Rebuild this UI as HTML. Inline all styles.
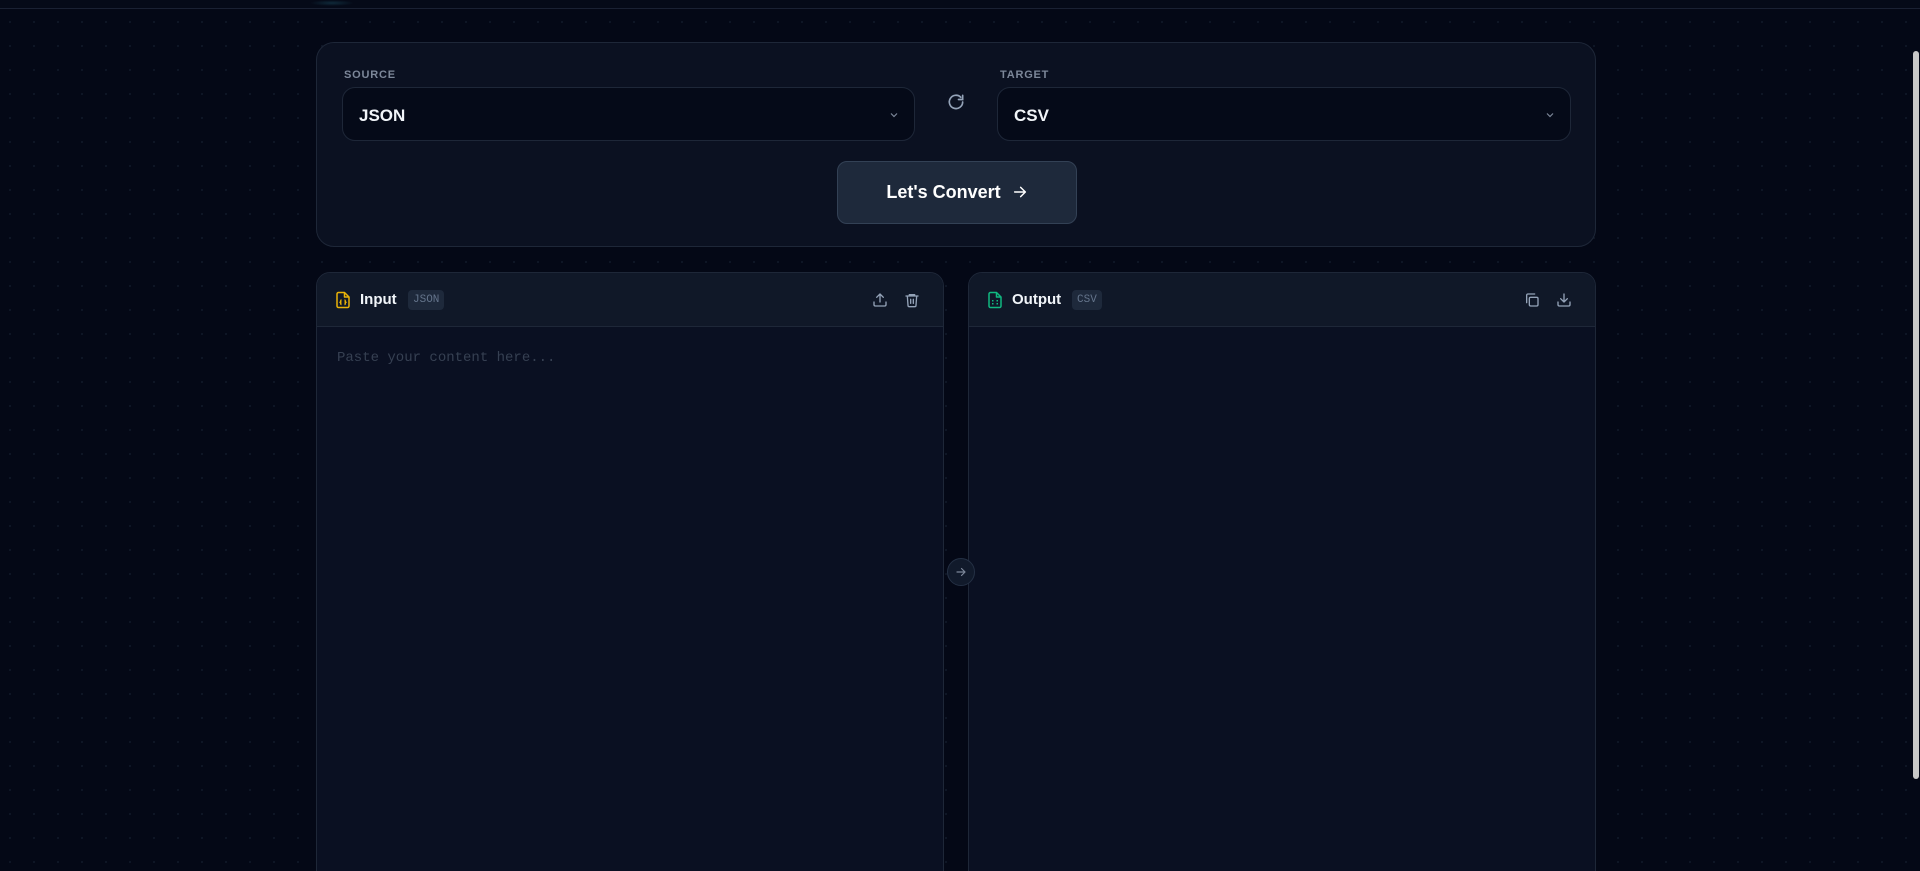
<!DOCTYPE html>
<html><head><meta charset="utf-8"><style>
*{box-sizing:border-box;margin:0;padding:0}
html,body{width:1920px;height:871px;overflow:hidden;background:#040816;font-family:"Liberation Sans",sans-serif;}
body{position:relative;background-color:#040816;background-image:radial-gradient(circle,#0f1626 1px,transparent 1.3px);background-size:24px 24px;background-position:-2px 10px;}
.top{position:absolute;left:0;top:0;width:1920px;height:9px;background:#050a18;border-bottom:1px solid #1a2133}
.glow{position:absolute;left:310px;top:0;width:44px;height:6px;background:radial-gradient(ellipse,#0f2a3a,transparent 70%)}
.cfg{position:absolute;left:316px;top:42px;width:1280px;height:205px;background:#0b1121;border:1px solid #1e2738;border-radius:18px}
.lbl{position:absolute;top:26px;font-size:11px;font-weight:bold;letter-spacing:.8px;color:#7c8799}
.sel{position:absolute;top:44px;height:54px;background:#050a18;border:1px solid #1e2738;border-radius:13px;color:#f1f5f9;font-size:17px;font-weight:bold;padding:18px 0 0 16px}
.sel svg{position:absolute;right:14px;top:21px}
.btn{position:absolute;left:520px;top:118px;width:240px;height:63px;background:#1e293b;border:1px solid #334155;border-radius:10px;color:#fff;font-size:18px;font-weight:bold;text-align:center;line-height:61px}
.pan{position:absolute;top:272px;width:628px;height:620px;background:#0a1022;border:1px solid #1e2738;border-radius:14px;overflow:hidden}
.hd{height:54px;background:#101828;border-bottom:1px solid #1e2738;position:relative}
.hd .ic{position:absolute;left:17px;top:17px}
.hd .t{position:absolute;left:43px;top:18px;font-size:15px;font-weight:bold;color:#f1f5f9}
.badge{position:absolute;top:17px;height:20px;background:#1e293b;border-radius:4px;color:#64748b;font-family:"Liberation Mono",monospace;font-size:11px;line-height:20px;padding:0 5px}
.ac{position:absolute;top:19px}
.ph{position:absolute;left:20px;top:77px;font-family:"Liberation Mono",monospace;font-size:14px;color:#364052}
.mid{position:absolute;z-index:5;left:947px;top:558px;width:28px;height:28px;border-radius:50%;background:#111a2b;border:1px solid #243044}
.sb{position:absolute;left:1913px;top:51px;width:6px;height:728px;background:#c8c8c8;border-radius:3px}
</style></head><body>
<div class="top"></div><div class="glow"></div>
<div class="cfg">
 <div class="lbl" style="left:27px">SOURCE</div>
 <div class="sel" style="left:25px;width:573px">JSON<svg width="12" height="12" viewBox="0 0 12 12"><path d="M3 4.5l3 3 3-3" fill="none" stroke="#7c8799" stroke-width="1.2"/></svg></div>
 <svg style="position:absolute;left:629px;top:49px" width="20" height="20" viewBox="0 0 24 24" fill="none" stroke="#94a3b8" stroke-width="2" stroke-linecap="round"><path d="M20 12a8 8 0 1 1-2.3-5.7"/><path d="M20 4v5h-5"/></svg>
 <div class="lbl" style="left:683px">TARGET</div>
 <div class="sel" style="left:680px;width:574px">CSV<svg width="12" height="12" viewBox="0 0 12 12"><path d="M3 4.5l3 3 3-3" fill="none" stroke="#7c8799" stroke-width="1.2"/></svg></div>
 <div class="btn">Let's Convert <svg style="vertical-align:-2px;margin-left:6px" width="16" height="16" viewBox="0 0 24 24" fill="none" stroke="#fff" stroke-width="2.2" stroke-linecap="round" stroke-linejoin="round"><path d="M4 12h16M13 5l7 7-7 7"/></svg></div>
</div>
<div class="pan" style="left:316px">
 <div class="hd">
  <svg class="ic" width="18" height="20" viewBox="0 0 24 24" fill="none" stroke="#eab308" stroke-width="2" stroke-linejoin="round"><path d="M14 2H6a2 2 0 0 0-2 2v16a2 2 0 0 0 2 2h12a2 2 0 0 0 2-2V8z"/><path d="M14 2v6h6"/><path d="M10 12c-1 0-1 1-1 2s-1 1-1 1 1 0 1 1 0 2 1 2M14 12c1 0 1 1 1 2s1 1 1 1-1 0-1 1 0 2-1 2"/></svg>
  <div class="t">Input</div>
  <div class="badge" style="left:91px">JSON</div>
  <svg class="ac" style="left:555px" width="16" height="16" viewBox="0 0 24 24" fill="none" stroke="#94a3b8" stroke-width="2" stroke-linecap="round" stroke-linejoin="round"><path d="M21 15v4a2 2 0 0 1-2 2H5a2 2 0 0 1-2-2v-4M17 8l-5-5-5 5M12 3v12"/></svg>
  <svg class="ac" style="left:587px" width="16" height="16" viewBox="0 0 24 24" fill="none" stroke="#94a3b8" stroke-width="2" stroke-linecap="round" stroke-linejoin="round"><path d="M3 6h18M8 6V4h8v2M19 6l-1 14a2 2 0 0 1-2 2H8a2 2 0 0 1-2-2L5 6M10 11v6M14 11v6"/></svg>
 </div>
 <div class="ph">Paste your content here...</div>
</div>
<div class="pan" style="left:968px">
 <div class="hd">
  <svg class="ic" width="18" height="20" viewBox="0 0 24 24" fill="none" stroke="#10b981" stroke-width="2" stroke-linejoin="round"><path d="M14 2H6a2 2 0 0 0-2 2v16a2 2 0 0 0 2 2h12a2 2 0 0 0 2-2V8z"/><path d="M14 2v6h6"/><path d="M8 13h2M14 13h2M8 17h2M14 17h2"/></svg>
  <div class="t">Output</div>
  <div class="badge" style="left:103px">CSV</div>
  <svg class="ac" style="left:555px" width="16" height="16" viewBox="0 0 24 24" fill="none" stroke="#94a3b8" stroke-width="2" stroke-linecap="round" stroke-linejoin="round"><rect x="8" y="8" width="13" height="13" rx="2"/><path d="M4 16V5a2 2 0 0 1 2-2h10"/></svg>
  <svg class="ac" style="left:587px" width="16" height="16" viewBox="0 0 24 24" fill="none" stroke="#94a3b8" stroke-width="2" stroke-linecap="round" stroke-linejoin="round"><path d="M21 15v4a2 2 0 0 1-2 2H5a2 2 0 0 1-2-2v-4M7 10l5 5 5-5M12 15V3"/></svg>
 </div>
</div>
<div class="mid"><svg style="position:absolute;left:7px;top:7px" width="12" height="12" viewBox="0 0 24 24" fill="none" stroke="#7c8799" stroke-width="2.4" stroke-linecap="round" stroke-linejoin="round"><path d="M4 12h16M13 5l7 7-7 7"/></svg></div>
<div class="sb"></div>
</body></html>
